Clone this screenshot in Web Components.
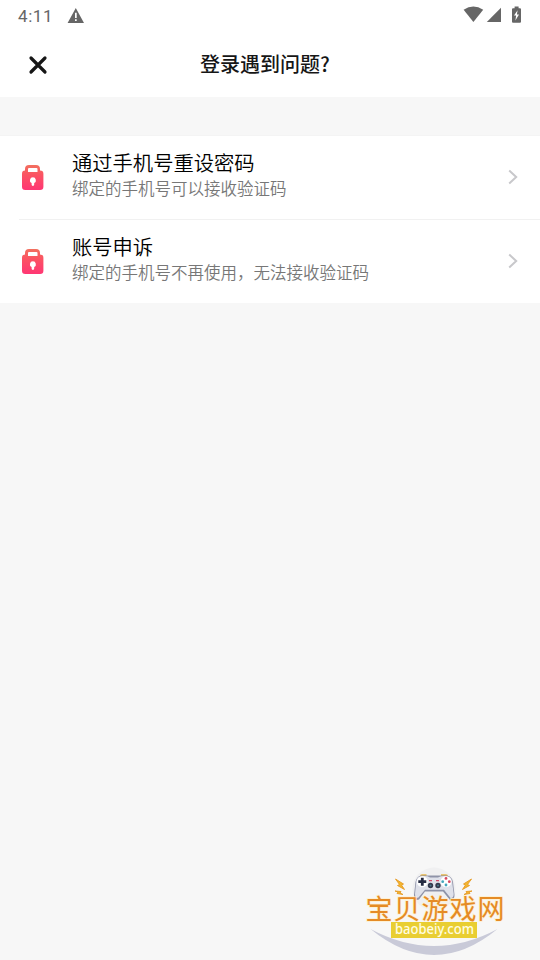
<!DOCTYPE html>
<html lang="zh-CN">
<head>
  <meta charset="UTF-8">
  <meta name="viewport" content="width=device-width, initial-scale=1.0">
  <title>登录遇到问题?</title>
  <style>
    html, body {
      margin: 0;
      height: 100%;
      overflow: hidden;
      background: #f7f7f7;
      font-family: Roboto, "Noto Sans CJK SC", sans-serif;
    }
  </style>
</head>
<body>
  <help-page>
    <status-bar slot="top" time="4:11"></status-bar>
    <title-bar slot="top">登录遇到问题?</title-bar>
    <help-item>
      通过手机号重设密码
      <span slot="detail">绑定的手机号可以接收验证码</span>
    </help-item>
    <help-item divided>
      账号申诉
      <span slot="detail">绑定的手机号不再使用，无法接收验证码</span>
    </help-item>
    <site-badge slot="badge"></site-badge>
  </help-page>

  <script>
    class HelpPage extends HTMLElement {
      constructor() {
        super();
        this.attachShadow({mode: 'open'});
      }

      connectedCallback() {
        this.shadowRoot.innerHTML = `
          <style>
            :host {
              display: flex;
              flex-direction: column;
              position: relative;
              height: 100%;
              background: #f7f7f7;
            }
            header {
              background: #fff;
            }
            main {
              margin-top: 38px;
              border-top: 1px solid #f4f4f4;
              background: #fff;
            }
          </style>
          <header><slot name="top"></slot></header>
          <main><slot></slot></main>
          <slot name="badge"></slot>
        `;
      }
    }

    class StatusBar extends HTMLElement {
      constructor() {
        super();
        this.attachShadow({mode: 'open'});
      }

      connectedCallback() {
        this.shadowRoot.innerHTML = `
          <style>
            :host {
              display: flex;
              align-items: center;
              height: 32px;
              padding: 0 17px 0 18px;
              color: #666;
              font-size: 17px;
              letter-spacing: 0.6px;
            }
            svg {
              display: block;
              fill: #666;
            }
            .warning {
              margin-left: 13.5px;
            }
            .system {
              margin-left: auto;
            }
          </style>
          <span>${this.getAttribute('time')}</span>
          <svg class="warning" width="18" height="32" viewBox="0 0 18 32">
            <path fill-rule="evenodd" d="M8.8 8 17 23H.6ZM8 12.8V18h1.7v-5.2ZM8 19.2V21h1.7v-1.8Z"/>
          </svg>
          <svg class="system" width="60" height="32" viewBox="463 0 60 32">
            <path d="M463.6 9.8Q473.4 3.4 483.2 9.8L473.4 22Z"/>
            <path d="M501 7.8V22H486.8Z"/>
            <path fill-rule="evenodd" d="M514.6 6.4h4v1.8h1.4q1 0 1 1v12.6q0 1-1 1h-7q-1 0-1-1V9.2q0-1 1-1h1.6ZM517.6 10.2l-3.6 5.4h2.1l-.7 5 3.6-6h-2.1Z"/>
          </svg>
        `;
      }
    }

    class TitleBar extends HTMLElement {
      constructor() {
        super();
        this.attachShadow({mode: 'open'});
      }

      connectedCallback() {
        this.shadowRoot.innerHTML = `
          <style>
            :host {
              display: grid;
              grid-template-columns: 76px 1fr 76px;
              align-items: center;
              height: 65px;
            }
            svg {
              display: block;
              margin-left: 28px;
            }
            h1 {
              margin: 0;
              padding: 0 10px 2px 0;
              color: #161616;
              font: 500 20px/30px "Noto Sans CJK SC", sans-serif;
              text-align: center;
            }
          </style>
          <svg width="20" height="20" viewBox="0 0 20 20" fill="none" stroke="#161616" stroke-width="3.2" stroke-linecap="round">
            <path d="M3 3 17 17M17 3 3 17"/>
          </svg>
          <h1><slot></slot></h1>
        `;
      }
    }

    class HelpItem extends HTMLElement {
      constructor() {
        super();
        this.attachShadow({mode: 'open'});
      }

      connectedCallback() {
        this.shadowRoot.innerHTML = `
          <style>
            :host {
              display: block;
            }
            :host([divided])::before {
              content: "";
              display: block;
              height: 1px;
              margin-left: 19px;
              background: #f1f1f1;
            }
            .row {
              display: flex;
              align-items: center;
              height: 83px;
              padding: 0 21px;
            }
            svg {
              display: block;
              flex: none;
            }
            .texts {
              flex: 1;
              margin: 0 0 8px 27px;
              font-family: "Noto Sans CJK SC", sans-serif;
              font-weight: 350;
              white-space: nowrap;
            }
            .name {
              color: #000;
              font-size: 20.3px;
              line-height: 28px;
            }
            .detail {
              color: #777;
              font-size: 16.5px;
              line-height: 24px;
            }
            .arrow {
              margin-bottom: 2px;
            }
          </style>
          <div class="row">
            <svg width="24" height="27" viewBox="0 0 24 27">
              <defs>
                <linearGradient id="lock" x1="0" y1="0" x2="0" y2="1">
                  <stop offset="0" stop-color="#f2705f"/>
                  <stop offset=".4" stop-color="#fb5363"/>
                  <stop offset="1" stop-color="#ff3674"/>
                </linearGradient>
              </defs>
              <path fill="url(#lock)" fill-rule="evenodd" d="M4 6.5V5q0-4 4-4h7q4 0 4 4v1.5q3.4 0 3.4 3.2v13q0 3.3-3.3 3.3H4.3Q1 26 1 22.7v-13Q1 6.5 4 6.5ZM8 4q-1 0-1 1v3h9.5V5q0-1-1-1Z"/>
              <path fill="#fff" d="M11.9 13.3a3 3 0 0 1 1.3 5.7v1.6a1.3 1.3 0 0 1-2.6 0v-1.6a3 3 0 0 1 1.3-5.7Z"/>
            </svg>
            <div class="texts">
              <div class="name"><slot></slot></div>
              <div class="detail"><slot name="detail"></slot></div>
            </div>
            <svg class="arrow" width="12" height="16" viewBox="0 0 12 16" fill="none" stroke="#c8c8cb" stroke-width="2">
              <path d="M2.2 1.5 9.2 8 2.2 14.5"/>
            </svg>
          </div>
        `;
      }
    }

    class SiteBadge extends HTMLElement {
      constructor() {
        super();
        this.attachShadow({mode: 'open'});
      }

      connectedCallback() {
        this.shadowRoot.innerHTML = `
          <style>
            :host {
              display: block;
              position: absolute;
              right: 20px;
              bottom: 0;
            }
            svg {
              display: block;
            }
            .site {
              font: 27px "Noto Sans CJK SC", sans-serif;
            }
            .url {
              font: 500 14px "Noto Sans", "Noto Sans CJK SC", sans-serif;
            }
          </style>
          <svg width="170" height="100" viewBox="0 0 170 100">
            <circle cx="84" cy="29" r="21.5" fill="#f0f0f1"/>
            <path fill="#c9cad8" d="M20.5 69Q84 121 147.500 69 84 103 20.500 69Z"/>
            <g fill="#f3b62e" stroke="#e69b25" stroke-width=".9">
              <path d="M45.5 19 53.500 24 51.500 25 54.500 29.500 47.500 25.500 49.500 24.500Z"/>
              <path d="M45 31 51 31.500 50 33 53 34.500 47 33.500 48 32Z"/>
              <path d="M121.500 19 113.500 24 115.500 25 112.500 29.500 119.500 25.500 117.500 24.500Z"/>
              <path d="M122 31 116 31.500 117 33 114 34.500 120 33.500 119 32Z"/>
            </g>
            <path d="M70 16.500Q70 14.300 72 14.300H76.500V17H70ZM91 17V14.300H96Q98 14.300 98 16.500V17Z" fill="#e6b549"/>
            <path fill="#8f93a8" d="M71 15.500H97Q102 16.500 103 22L104.500 35Q104.500 41 100 40L93 31.500H75L69 39.500Q64 41.500 64 35L65.500 22Q66.500 16.500 71 15.500Z"/>
            <path fill="#dfe1ea" d="M71 16.200Q77 15.500 80 17.500H88Q92 15.500 97 16.200 101 17 102 21L103.700 34Q103.500 38.500 100.500 38L94 29.800H75L68.500 37.500Q65 38.500 65 34L66.300 21Q67 17 71 16.200Z"/>
            <circle cx="72.300" cy="21.700" r="5.500" fill="#fff"/>
            <circle cx="96" cy="21.700" r="5.500" fill="#fff"/>
            <path stroke="#252b42" stroke-width="2.800" d="M68.300 21.700h8M72.300 17.700v8"/>
            <circle cx="80.500" cy="25.500" r="2.700" fill="#35394d"/>
            <circle cx="88" cy="25.500" r="2.700" fill="#35394d"/>
            <circle cx="80.500" cy="25.500" r="1" fill="#47798a"/>
            <circle cx="88" cy="25.500" r="1" fill="#47798a"/>
            <path d="M79 20.600h3M86 20.600h3" stroke="#d24b69" stroke-width="1.300"/>
            <g fill="#d84861">
              <circle cx="96" cy="18.400" r="1.400"/>
              <circle cx="99.300" cy="21.700" r="1.400"/>
            </g>
            <g fill="#45a7bd">
              <circle cx="92.700" cy="21.700" r="1.400"/>
              <circle cx="96" cy="25" r="1.400"/>
            </g>
            <text class="site" x="15.500" y="58.500" textLength="139" fill="#e58b25" stroke="#fff0cf" stroke-width="1.500" paint-order="stroke">宝贝游戏网</text>
            <path fill="#e9ce32" d="M41 62h86v16H41Z"/>
            <text class="url" x="45" y="74" textLength="79" lengthAdjust="spacingAndGlyphs" fill="#fffde1">baobeiy.com</text>
          </svg>
        `;
      }
    }

    customElements.define('status-bar', StatusBar);
    customElements.define('title-bar', TitleBar);
    customElements.define('help-item', HelpItem);
    customElements.define('site-badge', SiteBadge);
    customElements.define('help-page', HelpPage);
  </script>
</body>
</html>
